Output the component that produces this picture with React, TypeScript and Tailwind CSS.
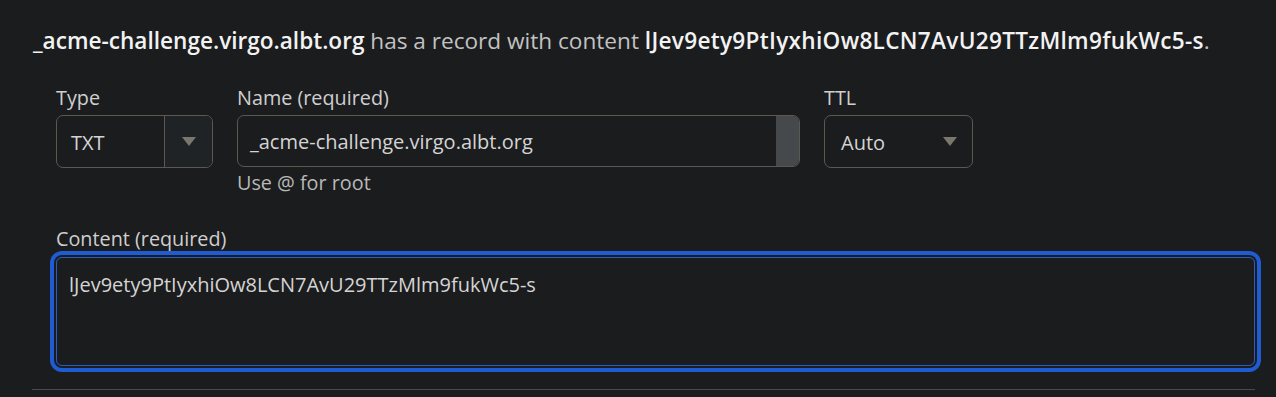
import React from "react";

const Caret = () => (
  <svg width="14" height="9" viewBox="0 0 14 9" className="block">
    <polygon points="0,0 14,0 7,9" fill="#7b776f" />
  </svg>
);

export default function App() {
  return (
    <div
      className="w-full h-[397px] bg-[#1b1c1e] pl-[32px] pr-[21px] pt-[27px] overflow-hidden"
      style={{ fontFamily: '"Open Sans", "Noto Sans", sans-serif' }}
    >
      <p className="text-[22.6px] leading-[28px] text-[#c2c2c2] pl-[1px] whitespace-nowrap">
        <span className="font-semibold text-[#f2f2f2]">_acme-challenge.virgo.albt.org</span>{" "}
        has a record with content{" "}
        <span className="font-semibold text-[#f2f2f2] tracking-[0.3px]">lJev9ety9PtIyxhiOw8LCN7AvU29TTzMlm9fukWc5-s</span>.
      </p>

      <div className="pl-[24px] mt-[31px]">
        <div className="flex gap-[24px]">
          <div className="flex flex-col">
            <label className="text-[19.8px] leading-[24px] text-[#cfcfcf]">Type</label>
            <div className="mt-[5px] flex w-[157px] h-[53px] rounded-[7px] border border-[#5b5851] overflow-hidden">
              <div className="flex-1 flex items-center pl-[14px] pt-[2px] text-[20px] text-[#d4d4d4]">TXT</div>
              <div className="w-[48px] border-l border-[#5b5851] bg-[#202325] flex items-center justify-center">
                <Caret />
              </div>
            </div>
          </div>

          <div className="flex flex-col">
            <label className="text-[19.8px] leading-[24px] text-[#cfcfcf]">Name (required)</label>
            <div className="mt-[5px] flex w-[563px] h-[52px] rounded-[7px] border border-[#5b5851] overflow-hidden">
              <div className="flex-1 flex items-center pl-[12px] pt-[2px] text-[20px] text-[#d4d4d4]">
                _acme-challenge.virgo.albt.org
              </div>
              <div className="w-[23px] bg-[#46494c]" />
            </div>
            <p className="mt-[4px] text-[19.8px] leading-[24px] text-[#b8b8b8]">Use @ for root</p>
          </div>

          <div className="flex flex-col">
            <label className="text-[19.8px] leading-[24px] text-[#cfcfcf]">TTL</label>
            <div className="mt-[5px] flex items-center justify-between w-[149px] h-[53px] rounded-[7px] border border-[#5b5851] pl-[16px] pr-[15px]">
              <span className="text-[20px] pt-[2px] text-[#d4d4d4]">Auto</span>
              <Caret />
            </div>
          </div>
        </div>

        <label className="block mt-[32px] text-[19.8px] leading-[24px] text-[#cfcfcf]">Content (required)</label>
        <div className="mt-[6px] h-[109px] rounded-[6px] border border-[#2a5cc4] ring-4 ring-[#1f5bd3] ring-offset-2 ring-offset-[#1b1c1e] pl-[12px] pt-[15px] text-[20px] leading-[24px] text-[#d4d4d4]">
          lJev9ety9PtIyxhiOw8LCN7AvU29TTzMlm9fukWc5-s
        </div>
      </div>

      <div className="mt-[23px] border-t border-[#4a4a4a]" />
    </div>
  );
}
